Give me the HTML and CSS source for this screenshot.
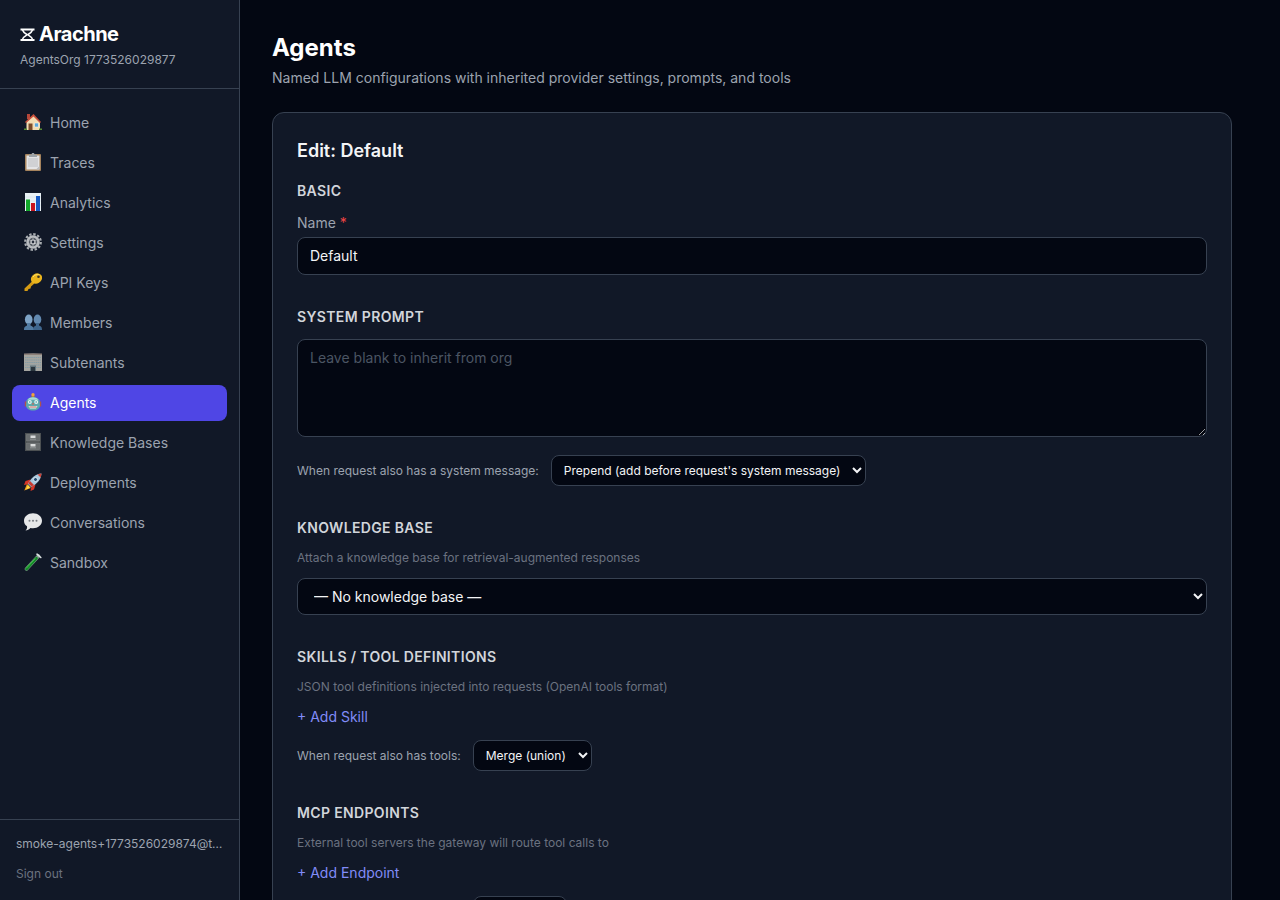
FILE: index.html
```html
<!DOCTYPE html>
<html lang="en">
<head>
  <meta charset="UTF-8">
  <meta name="viewport" content="width=device-width, initial-scale=1">
  <title>Arachne - Agents</title>
  <link rel="stylesheet" href="styles.css">
</head>
<body>
  <div class="layout">
    <aside class="sidebar">
      <div class="sidebar-header">
        <div class="brand">
          <svg class="brand-icon" viewBox="0 0 15 15" aria-hidden="true">
            <path d="M.5 2.500h14M.5 13h14" stroke="#fff" stroke-width="1.800"/>
            <path d="M2.500 3c.8 2.500 3 3.800 4.700 4.800C5.500 8.800 3.300 10 2.500 12.500M12.500 3c-.8 2.500-3 3.800-4.700 4.800 1.700 1 3.900 2.200 4.700 4.700" fill="none" stroke="#fff" stroke-width="1.600"/>
          </svg>
          <span>Arachne</span>
        </div>
        <p class="org">AgentsOrg 1773526029877</p>
      </div>

      <nav class="nav">
        <a href="#" class="nav-item">
          <svg class="nav-icon" viewBox="0 0 18 18" aria-hidden="true">
            <path d="M3 1h3v5H3z" fill="#b5473a"/>
            <path d="M2.500 9L9.500 2.500 16 9v8H2.500z" fill="#f3dcb2"/>
            <path d="M9.500 1L1 9l1 1 7.500-6.500L16 10l1-1z" fill="#c9503c"/>
            <path d="M4.500 10.500h4v6.500h-4z" fill="#7b4a28"/>
            <path d="M10.500 10h4v4h-4z" fill="#5aa7dc" stroke="#fff4dc" stroke-width=".6"/>
            <path d="M0 15.500h3V17H0zM15 15.500h3V17h-3z" fill="#5b8f35"/>
          </svg>
          Home
        </a>
        <a href="#" class="nav-item">
          <svg class="nav-icon" viewBox="0 0 18 18" aria-hidden="true">
            <rect x="1" y="1" width="16" height="17" rx="1" fill="#a5835d"/>
            <path d="M2.500 2.500h13v14h-13z" fill="#e4e4e6"/>
            <path d="M4 5h10v9H4z" fill="#d0d1d4"/>
            <path d="M5 1.500h2.500L8 0h2l.5 1.500H13V4H5z" fill="#9da3a8"/>
            <path d="M12 16.500l3.500-3.500v3.500z" fill="#b9babd"/>
          </svg>
          Traces
        </a>
        <a href="#" class="nav-item">
          <svg class="nav-icon" viewBox="0 0 18 18" aria-hidden="true">
            <path d="M1 0h16v18H1z" fill="#e9f1f5"/>
            <path d="M1 4h16M1 8h16M1 12h16" stroke="#c8dbe4" stroke-width=".5"/>
            <path d="M2 6.500h4V18H2z" fill="#12a72a"/>
            <path d="M7 10h4v8H7z" fill="#c9131f"/>
            <path d="M12 3h4v15h-4z" fill="#1559c4"/>
          </svg>
          Analytics
        </a>
        <a href="#" class="nav-item">
          <svg class="nav-icon" viewBox="0 0 18 18" aria-hidden="true">
            <circle cx="9" cy="9" r="7.800" fill="none" stroke="#a9adb1" stroke-width="2.200" stroke-dasharray="2.400 1.684"/>
            <circle cx="9" cy="9" r="5.500" fill="#565c64" stroke="#b9bcc0" stroke-width="2.600"/>
            <path d="M9 4v10M4.700 6.500l8.600 5M13.300 6.500l-8.600 5" stroke="#a5a9ad" stroke-width=".9"/>
            <circle cx="9" cy="9" r="2" fill="#252c3a" stroke="#d0d2d5" stroke-width="1.200"/>
          </svg>
          Settings
        </a>
        <a href="#" class="nav-item">
          <svg class="nav-icon" viewBox="0 0 18 18" aria-hidden="true">
            <path d="M9 7.500L.5 15.500V18H3.500L4.500 16 6.500 15.500 7 13.500 11.500 9.500z" fill="#d59b14"/>
            <ellipse cx="12.500" cy="5.500" rx="5.800" ry="4.900" transform="rotate(-30 12.500 5.500)" fill="#ebb51d"/>
            <path d="M9 4c1.500-2.300 4.500-3 6.500-2" fill="none" stroke="#ffe066"/>
            <circle cx="14.500" cy="3.800" r="1.300" fill="#3b3423"/>
          </svg>
          API Keys
        </a>
        <a href="#" class="nav-item">
          <svg class="nav-icon" viewBox="0 0 18 18" aria-hidden="true">
            <ellipse cx="13.500" cy="6.500" rx="3.800" ry="5" fill="#6289b0"/>
            <path d="M9 17c0-4 2-3.500 3-4.500V10h3v2.500c1.500 1 3 .5 3 4.500z" fill="#3f668d"/>
            <ellipse cx="4.700" cy="6.500" rx="3.800" ry="5" fill="#7ea3c6"/>
            <path d="M0 17c0-4 2-3.500 3-4.500V10h3.500v2.500c1.500 1 3 .5 3 4.500z" fill="#527ba2"/>
          </svg>
          Members
        </a>
        <a href="#" class="nav-item">
          <svg class="nav-icon" viewBox="0 0 18 18" aria-hidden="true">
            <path d="M0 1l9-.5 9 .5v17H0z" fill="#a5a5a0"/>
            <path d="M0 .5h18V2H0z" fill="#8c7f78"/>
            <path d="M1 4.500h16M1 7h16M1 9.500h16M1 12h16M1 14.500h5M12 14.500h5" stroke="#839ba5" stroke-width="1.200" stroke-dasharray="1.500 .6"/>
            <path d="M6 12.500h6V18H6z" fill="#64757d"/>
            <path d="M7 14h4v4H7z" fill="#2b363e"/>
          </svg>
          Subtenants
        </a>
        <a href="#" class="nav-item active">
          <svg class="nav-icon" viewBox="0 0 18 18" aria-hidden="true">
            <path d="M6.500 4.500L9 1.500l2.500 3z" fill="#a1853d"/>
            <circle cx="9" cy="1.700" r="1.700" fill="#f2a33a"/>
            <path d="M.8 8.500h2v5h-2zM15.200 8.500h2v5h-2z" fill="#b0524e"/>
            <path d="M2.500 7.500C4 3 14 3 15.500 7.500l.5 5c-.5 3.500-3 5-7 5s-6.500-1.500-7-5z" fill="#5ba9ad"/>
            <path d="M3.500 6.800C6 3.500 12 3.500 14.500 6.800z" fill="#a9dad9"/>
            <circle cx="5.800" cy="9" r="2" fill="#e8f4f2"/>
            <circle cx="12.200" cy="9" r="2" fill="#e8f4f2"/>
            <circle cx="5.800" cy="9" r=".8" fill="#3d9aa5"/>
            <circle cx="12.200" cy="9" r=".8" fill="#3d9aa5"/>
            <path d="M9 9.500l1.200 2H7.800z" fill="#d5604c"/>
            <path d="M4.500 13h9l-1.500 2.500H6z" fill="#f0efed"/>
            <path d="M5.500 14h7" stroke="#b7443f" stroke-width=".8"/>
          </svg>
          Agents
        </a>
        <a href="#" class="nav-item">
          <svg class="nav-icon" viewBox="0 0 18 18" aria-hidden="true">
            <path d="M1 0h16v18H1z" fill="#4c5052"/>
            <path d="M2.500 1.500h13v6.500h-13zM2.500 10h13v6.500h-13z" fill="#696d6f" stroke="#7e8284" stroke-width=".5"/>
            <path d="M6.500 2.500h5V5h-5zM6.500 11h5v2.500h-5z" fill="#d9dbdc"/>
            <path d="M6 6.200h6M6 14.800h6" stroke="#a0a3a5" stroke-width=".8"/>
          </svg>
          Knowledge Bases
        </a>
        <a href="#" class="nav-item">
          <svg class="nav-icon" viewBox="0 0 18 18" aria-hidden="true">
            <path d="M6.500 6.500L1.500 8 0 12l5-1zM11.500 11.500L10 16.500 6.500 18 7.500 13z" fill="#d63627"/>
            <path d="M3 11L.3 17.500 7 15z" fill="#f3a31c"/>
            <path d="M4 12l-2 4.500L6 14.500z" fill="#ffdf4c"/>
            <path d="M4 11C7 5 11 1 17.500.5 17 7 13 11 7 14z" fill="#a9c9df"/>
            <path d="M13.500 1.500l4-1-.8 4z" fill="#cf4336"/>
            <path d="M4.500 10.500l3 3 2.500-1.500-4-4z" fill="#c83b30"/>
            <circle cx="11.500" cy="6.500" r="2" fill="#254e75" stroke="#edf4f8" stroke-width=".8"/>
          </svg>
          Deployments
        </a>
        <a href="#" class="nav-item">
          <svg class="nav-icon" viewBox="0 0 18 18" aria-hidden="true">
            <path d="M9 .3c5 0 9 3.200 9 7.400s-4 7.500-9 7.500c-.8 0-2 0-2.500-.2C5 16.500 3.500 17.500 1.500 17.500 3 16 3.300 15 3 13.300 1 12 0 10 0 7.700 0 3.500 4 .3 9 .3z" fill="#e6e7e8"/>
            <circle cx="5.500" cy="7.700" r="1" fill="#777b80"/>
            <circle cx="9" cy="7.700" r="1" fill="#777b80"/>
            <circle cx="12.500" cy="7.700" r="1" fill="#777b80"/>
          </svg>
          Conversations
        </a>
        <a href="#" class="nav-item">
          <svg class="nav-icon" viewBox="0 0 18 18" aria-hidden="true">
            <path d="M14.500 3L2.500 16" stroke="#7d9488" stroke-width="3.600" stroke-linecap="round"/>
            <path d="M12.500 5.200L2.500 16" stroke="#128a28" stroke-width="2.600" stroke-linecap="round"/>
            <path d="M11 5.800L2.500 15" stroke="#54cb54" stroke-width=".8" stroke-linecap="round"/>
            <path d="M13 1.200l3.800 3.300" stroke="#dce2e2" stroke-width="1.600" stroke-linecap="round"/>
          </svg>
          Sandbox
        </a>
      </nav>

      <div class="sidebar-footer">
        <p class="user-email">smoke-agents+1773526029874@test.local</p>
        <button type="button" class="sign-out">Sign out</button>
      </div>
    </aside>

    <main class="main">
      <div class="content">
        <header class="page-header">
          <h1>Agents</h1>
          <p>Named LLM configurations with inherited provider settings, prompts, and tools</p>
        </header>

        <form class="card">
          <h2>Edit: Default</h2>

          <section class="section">
            <h3>Basic</h3>
            <div class="field">
              <label for="agentName">Name <span class="required">*</span></label>
              <input type="text" id="agentName" class="control" value="Default">
            </div>
          </section>

          <section class="section">
            <h3 id="promptTitle">System Prompt</h3>
            <textarea class="control prompt" rows="4" placeholder="Leave blank to inherit from org" aria-labelledby="promptTitle"></textarea>
            <div class="merge-row">
              <label for="promptPolicy">When request also has a system message:</label>
              <select id="promptPolicy" class="control control-small">
                <option>Prepend (add before request's system message)</option>
              </select>
            </div>
          </section>

          <section class="section">
            <h3 id="kbTitle">Knowledge Base</h3>
            <p class="hint">Attach a knowledge base for retrieval-augmented responses</p>
            <select class="control" aria-labelledby="kbTitle">
              <option>— No knowledge base —</option>
            </select>
          </section>

          <section class="section">
            <h3>Skills / Tool Definitions</h3>
            <p class="hint">JSON tool definitions injected into requests (OpenAI tools format)</p>
            <button type="button" class="btn-add">+ Add Skill</button>
            <div class="merge-row">
              <label for="skillPolicy">When request also has tools:</label>
              <select id="skillPolicy" class="control control-small">
                <option>Merge (union)</option>
              </select>
            </div>
          </section>

          <section class="section">
            <h3>MCP Endpoints</h3>
            <p class="hint">External tool servers the gateway will route tool calls to</p>
            <button type="button" class="btn-add">+ Add Endpoint</button>
            <div class="merge-row">
              <label for="mcpPolicy">When request also has tools:</label>
              <select id="mcpPolicy" class="control control-small">
                <option>Overwrite</option>
              </select>
            </div>
          </section>
        </form>
      </div>
    </main>
  </div>
</body>
</html>
```
FILE: styles.css
```css
:root {
  --bg: #030712;
  --panel: #111827;
  --border: #374151;
  --text: #f3f4f6;
  --muted: #9ca3af;
  --dim: #6b7280;
  --primary: #4f46e5;
  --link: #818cf8;
}

* {
  box-sizing: border-box;
}

body {
  margin: 0;
  background-color: var(--bg);
  color: var(--text);
  font-family: Inter, "Liberation Sans", sans-serif;
  font-size: 14px;
  line-height: 20px;
}

h1, h2, h3, p {
  margin: 0;
}

button, input, textarea, select {
  font: inherit;
}

button {
  padding: 0;
  border: none;
  background: none;
  cursor: pointer;
}

.layout {
  display: flex;
  height: 100vh;
}

/* Sidebar */
.sidebar {
  width: 240px;
  flex-shrink: 0;
  display: flex;
  flex-direction: column;
  background-color: var(--panel);
  border-right: 1px solid var(--border);
}

.sidebar-header {
  padding: 20px;
  border-bottom: 1px solid var(--border);
}

.brand {
  display: flex;
  align-items: center;
  gap: 4px;
  color: white;
  font-size: 20px;
  font-weight: 700;
  line-height: 28px;
  letter-spacing: -0.025em;
}

.brand-icon {
  width: 15px;
  height: 15px;
}

.org {
  margin-top: 4px;
  color: var(--muted);
  font-size: 12px;
  line-height: 16px;
}

.nav {
  flex: 1;
  display: flex;
  flex-direction: column;
  gap: 4px;
  padding: 16px 12px;
}

.nav-item {
  display: flex;
  align-items: center;
  gap: 8px;
  padding: 8px 12px;
  border-radius: 8px;
  color: var(--muted);
  text-decoration: none;
}

.nav-item.active {
  background-color: var(--primary);
  color: white;
}

.nav-icon {
  width: 18px;
  height: 18px;
  margin-bottom: 2px;
  flex-shrink: 0;
}

.sidebar-footer {
  padding: 16px;
  border-top: 1px solid var(--border);
  font-size: 12px;
}

.user-email {
  color: var(--muted);
  line-height: 16px;
  white-space: nowrap;
  overflow: hidden;
  text-overflow: ellipsis;
}

.sign-out {
  display: block;
  margin-top: 12px;
  color: var(--dim);
  line-height: 20px;
}

/* Main */
.main {
  flex: 1;
  overflow-y: auto;
  scrollbar-width: none;
}

.content {
  max-width: 1024px;
  padding: 32px;
}

.page-header {
  margin-bottom: 24px;
}

.page-header h1 {
  color: white;
  font-size: 24px;
  font-weight: 700;
  line-height: 32px;
}

.page-header p {
  margin-top: 4px;
  color: var(--muted);
}

.card {
  padding: 24px;
  background-color: var(--panel);
  border: 1px solid var(--border);
  border-radius: 12px;
}

.card h2 {
  margin-bottom: 16px;
  font-size: 18px;
  font-weight: 600;
  line-height: 28px;
}

.section {
  display: flex;
  flex-direction: column;
  align-items: stretch;
  gap: 12px;
  margin-bottom: 32px;
}

.section h3 {
  color: #d1d5db;
  font-size: 14px;
  font-weight: 600;
  letter-spacing: 0.025em;
  text-transform: uppercase;
}

.field {
  display: flex;
  flex-direction: column;
  gap: 4px;
}

.field label {
  color: var(--muted);
}

.required {
  color: #ef4444;
}

.control {
  width: 100%;
  padding: 8px 12px;
  background-color: var(--bg);
  border: 1px solid var(--border);
  border-radius: 8px;
  color: var(--text);
}

.control::placeholder {
  color: #4b5563;
}

.prompt {
  display: block;
  margin-bottom: 6px;
  resize: vertical;
}

.control-small {
  width: auto;
  padding: 6px 8px;
  font-size: 12px;
}

.hint {
  color: var(--dim);
  font-size: 12px;
  line-height: 16px;
}

.btn-add {
  align-self: flex-start;
  padding-bottom: 1px;
  color: var(--link);
  line-height: 20px;
}

.merge-row {
  display: flex;
  align-items: center;
  gap: 12px;
  color: var(--muted);
  font-size: 12px;
}
```
